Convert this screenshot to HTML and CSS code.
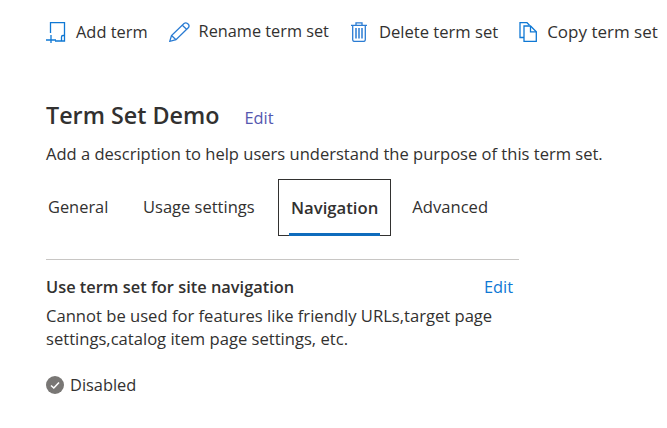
FILE: index.html
```html
<!DOCTYPE html>
<html>
<head>
<meta charset="UTF-8">
<title>Term Set Demo</title>
<link rel="stylesheet" href="styles.css">
</head>
<body>
<div class="toolbar">
    <div class="tool tool_add">
        <svg width="20" height="21" viewBox="0 0 20 21" fill="none" stroke="#0f78d4" stroke-width="1.3">
            <path d="M4.500 11V0.700H18.500V19H9"/>
            <path d="M0 18H10M5 13V21"/>
            <path d="M15.500 19V15Q15.500 13.500 17 13.500H18.500"/>
        </svg>
        <span>Add term</span>
    </div>
    <div class="tool tool_rename">
        <svg width="21" height="20" viewBox="0 0 21 20" fill="none" stroke="#2b7cd3" stroke-width="1.3">
            <path d="M0.800 19.300L2.500 13.500L15 1.500Q16.700 0.300 18.500 1.500L19.500 2.500Q20.600 4 19.500 5.500L7 17.700Z"/>
            <path d="M2.500 13.500L7 17.700M13.300 3.200L17.800 7.500"/>
        </svg>
        <span>Rename term set</span>
    </div>
    <div class="tool tool_delete">
        <svg width="16" height="20" viewBox="0 0 16 20" fill="none" stroke="#2b7cd3" stroke-width="1.3">
            <path d="M0 3.300H16M5 3.300V0.800H11V3.300"/>
            <path d="M1.700 3.300V17.700Q1.700 19.400 3.400 19.400H12.600Q14.300 19.400 14.300 17.700V3.300"/>
            <path d="M5 6V16.500M8 6V16.500M11 6V16.500" stroke-width="1.500"/>
        </svg>
        <span>Delete term set</span>
    </div>
    <div class="tool tool_copy">
        <svg width="18" height="20" viewBox="0 0 18 20" fill="none" stroke="#0f78d4" stroke-width="1.300">
            <path d="M5 15.500H1V0.700H8L10.500 3.200"/>
            <path d="M5 4H11.500L17.300 9.800V19.300H5Z"/>
            <path d="M11.500 4V9.800H17.300"/>
        </svg>
        <span>Copy term set</span>
    </div>
</div>

<div class="title_row">
    <h1>Term Set Demo</h1>
    <a class="edit_purple">Edit</a>
</div>
<p class="desc">Add a description to help users understand the purpose of this term set.</p>

<div class="tabs">
    <div class="tab tab_general">General</div>
    <div class="tab tab_usage">Usage settings</div>
    <div class="tab tab_active"><span>Navigation</span></div>
    <div class="tab tab_advanced">Advanced</div>
</div>

<div class="section">
    <div class="section_head">
        <span class="section_title">Use term set for site navigation</span>
        <a class="edit_blue">Edit</a>
    </div>
    <p class="section_text">Cannot be used for features like friendly URLs,target page settings,catalog item page settings, etc.</p>
    <div class="status">
        <svg width="18" height="18" viewBox="0 0 18 18">
            <circle cx="9" cy="9" r="9" fill="#797775"/>
            <path d="M5 9.500L7.800 12L13 6.500" fill="none" stroke="#fff" stroke-width="1.600"/>
        </svg>
        <span>Disabled</span>
    </div>
</div>
</body>
</html>
```

FILE: styles.css
```css
body {
    margin: 0;
    width: 667px;
    height: 428px;
    overflow: hidden;
    background: #fff;
    color: #323130;
    font-family: "Open Sans", "Noto Sans", sans-serif;
    font-size: 16.4px;
}

.toolbar {
    display: flex;
    align-items: center;
    height: 24px;
    padding-top: 20px;
    padding-left: 46px;
    white-space: nowrap;
}

.tool {
    display: flex;
    align-items: center;
}

.tool span {
    padding-bottom: 2px;
}

.tool svg {
    margin-right: 10px;
}

.tool_add {
    margin-right: 21px;
}

.tool_rename {
    margin-right: 22px;
    font-size: 16.3px;
}

.tool_rename svg {
    margin-right: 9px;
}

.tool_delete {
    margin-right: 21px;
    font-size: 16.6px;
}

.tool_delete svg {
    margin-right: 12px;
}

.tool_copy {
    font-size: 17px;
}

.title_row {
    display: flex;
    align-items: baseline;
    margin-top: 55px;
    padding-left: 46px;
}

h1 {
    margin: 0;
    font-size: 23.3px;
    font-weight: 600;
    line-height: 32px;
}

.edit_purple {
    margin-left: 25px;
    color: #5558af;
}

.desc {
    margin: 12px 0 0 46px;
    font-size: 16.55px;
    line-height: 22px;
    white-space: nowrap;
}

.tabs {
    display: flex;
    height: 57px;
    margin-top: 14px;
    padding-left: 48px;
}

.tab {
    line-height: 56px;
    white-space: nowrap;
}

.tab_general {
    width: 59px;
}

.tab_usage {
    width: 112px;
    margin-left: 36px;
    font-size: 16.5px;
}

.tab_active {
    box-sizing: border-box;
    height: 57px;
    margin-left: 23px;
    padding: 0 10px;
    border: 1px solid #323130;
    font-size: 16.7px;
    font-weight: 600;
}

.tab_active span {
    display: block;
    height: 53px;
    padding: 0 2px;
    border-bottom: 3px solid #0f6cbd;
}

.tab_advanced {
    margin-left: 21px;
    font-size: 16.6px;
}

.section {
    width: 473px;
    margin-top: 23px;
    margin-left: 46px;
    border-top: 1px solid #c8c6c4;
}

.section_head {
    display: flex;
    justify-content: space-between;
    padding: 15px 6px 0 0;
    line-height: 24px;
}

.section_title {
    font-weight: 600;
}

.edit_blue {
    color: #0f78d4;
}

.section_text {
    margin: 5px 0 0;
    font-size: 16.6px;
    line-height: 23px;
}

.status {
    display: flex;
    align-items: center;
    gap: 6px;
    margin-top: 23px;
    line-height: 24px;
}
```
